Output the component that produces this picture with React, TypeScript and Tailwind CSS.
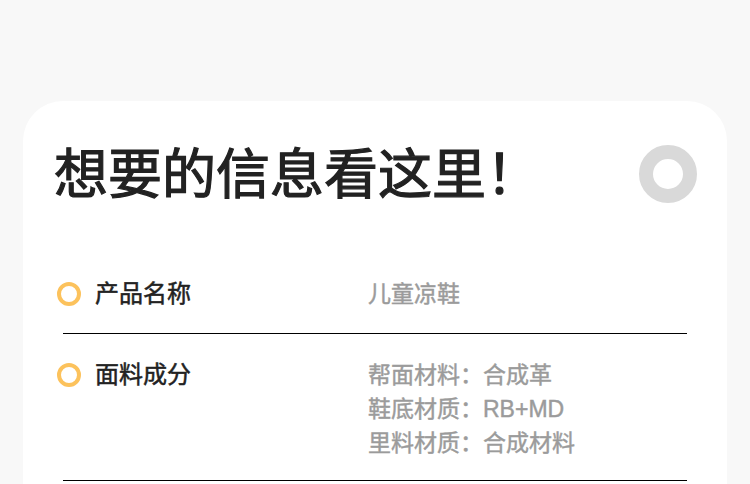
import React from 'react';

interface InfoRowProps {
  label: string;
  values: string[];
  className?: string;
}

const InfoRow: React.FC<InfoRowProps> = ({ label, values, className = '' }) => {
  return (
    <div className={`flex border-b border-black ${className}`}>
      <div className="-ml-[6px] mt-[5px] h-[24px] w-[24px] flex-shrink-0 rounded-full border-[4px] border-[#fcc25c]" />
      <div className="ml-[14px] w-[273px] text-[24px] leading-[34px] text-[#222222] [-webkit-text-stroke:0.5px_#222222]">
        {label}
      </div>
      <div className="flex-1">
        {values.map((v) => (
          <p key={v} className="text-[23px] leading-[34px] text-[#9b9b9b] [-webkit-text-stroke:0.45px_#9b9b9b]">
            {v}
          </p>
        ))}
      </div>
    </div>
  );
};

const App: React.FC = () => {
  return (
    <div
      className="h-[484px] overflow-hidden bg-[#f8f8f8] pt-[101px] px-[23px]"
      style={{ fontFamily: '"Liberation Sans", "Noto Sans CJK SC", sans-serif' }}
    >
      <div className="h-[520px] rounded-t-[40px] bg-white pt-[43px]">
        <div className="flex items-start justify-between pl-[31px] pr-[30px]">
          <h1
            className="text-[54px] leading-none text-[#222222] [-webkit-text-stroke:1.2px_#222222]"
            style={{ fontFamily: '"Noto Sans CJK SC", sans-serif' }}
          >
            想要的信息看这里！
          </h1>
          <div className="mt-[1px] h-[58px] w-[58px] rounded-full border-[14px] border-[#d9d9d9]" />
        </div>
        <div className="mt-[50px] px-[40px]">
          <InfoRow label="产品名称" values={['儿童凉鞋']} className="pt-[24px] pb-[22px]" />
          <InfoRow
            label="面料成分"
            values={['帮面材料：合成革', '鞋底材质：RB+MD', '里料材质：合成材料']}
            className="pt-[24px] pb-[20px]"
          />
        </div>
      </div>
    </div>
  );
};

export default App;
